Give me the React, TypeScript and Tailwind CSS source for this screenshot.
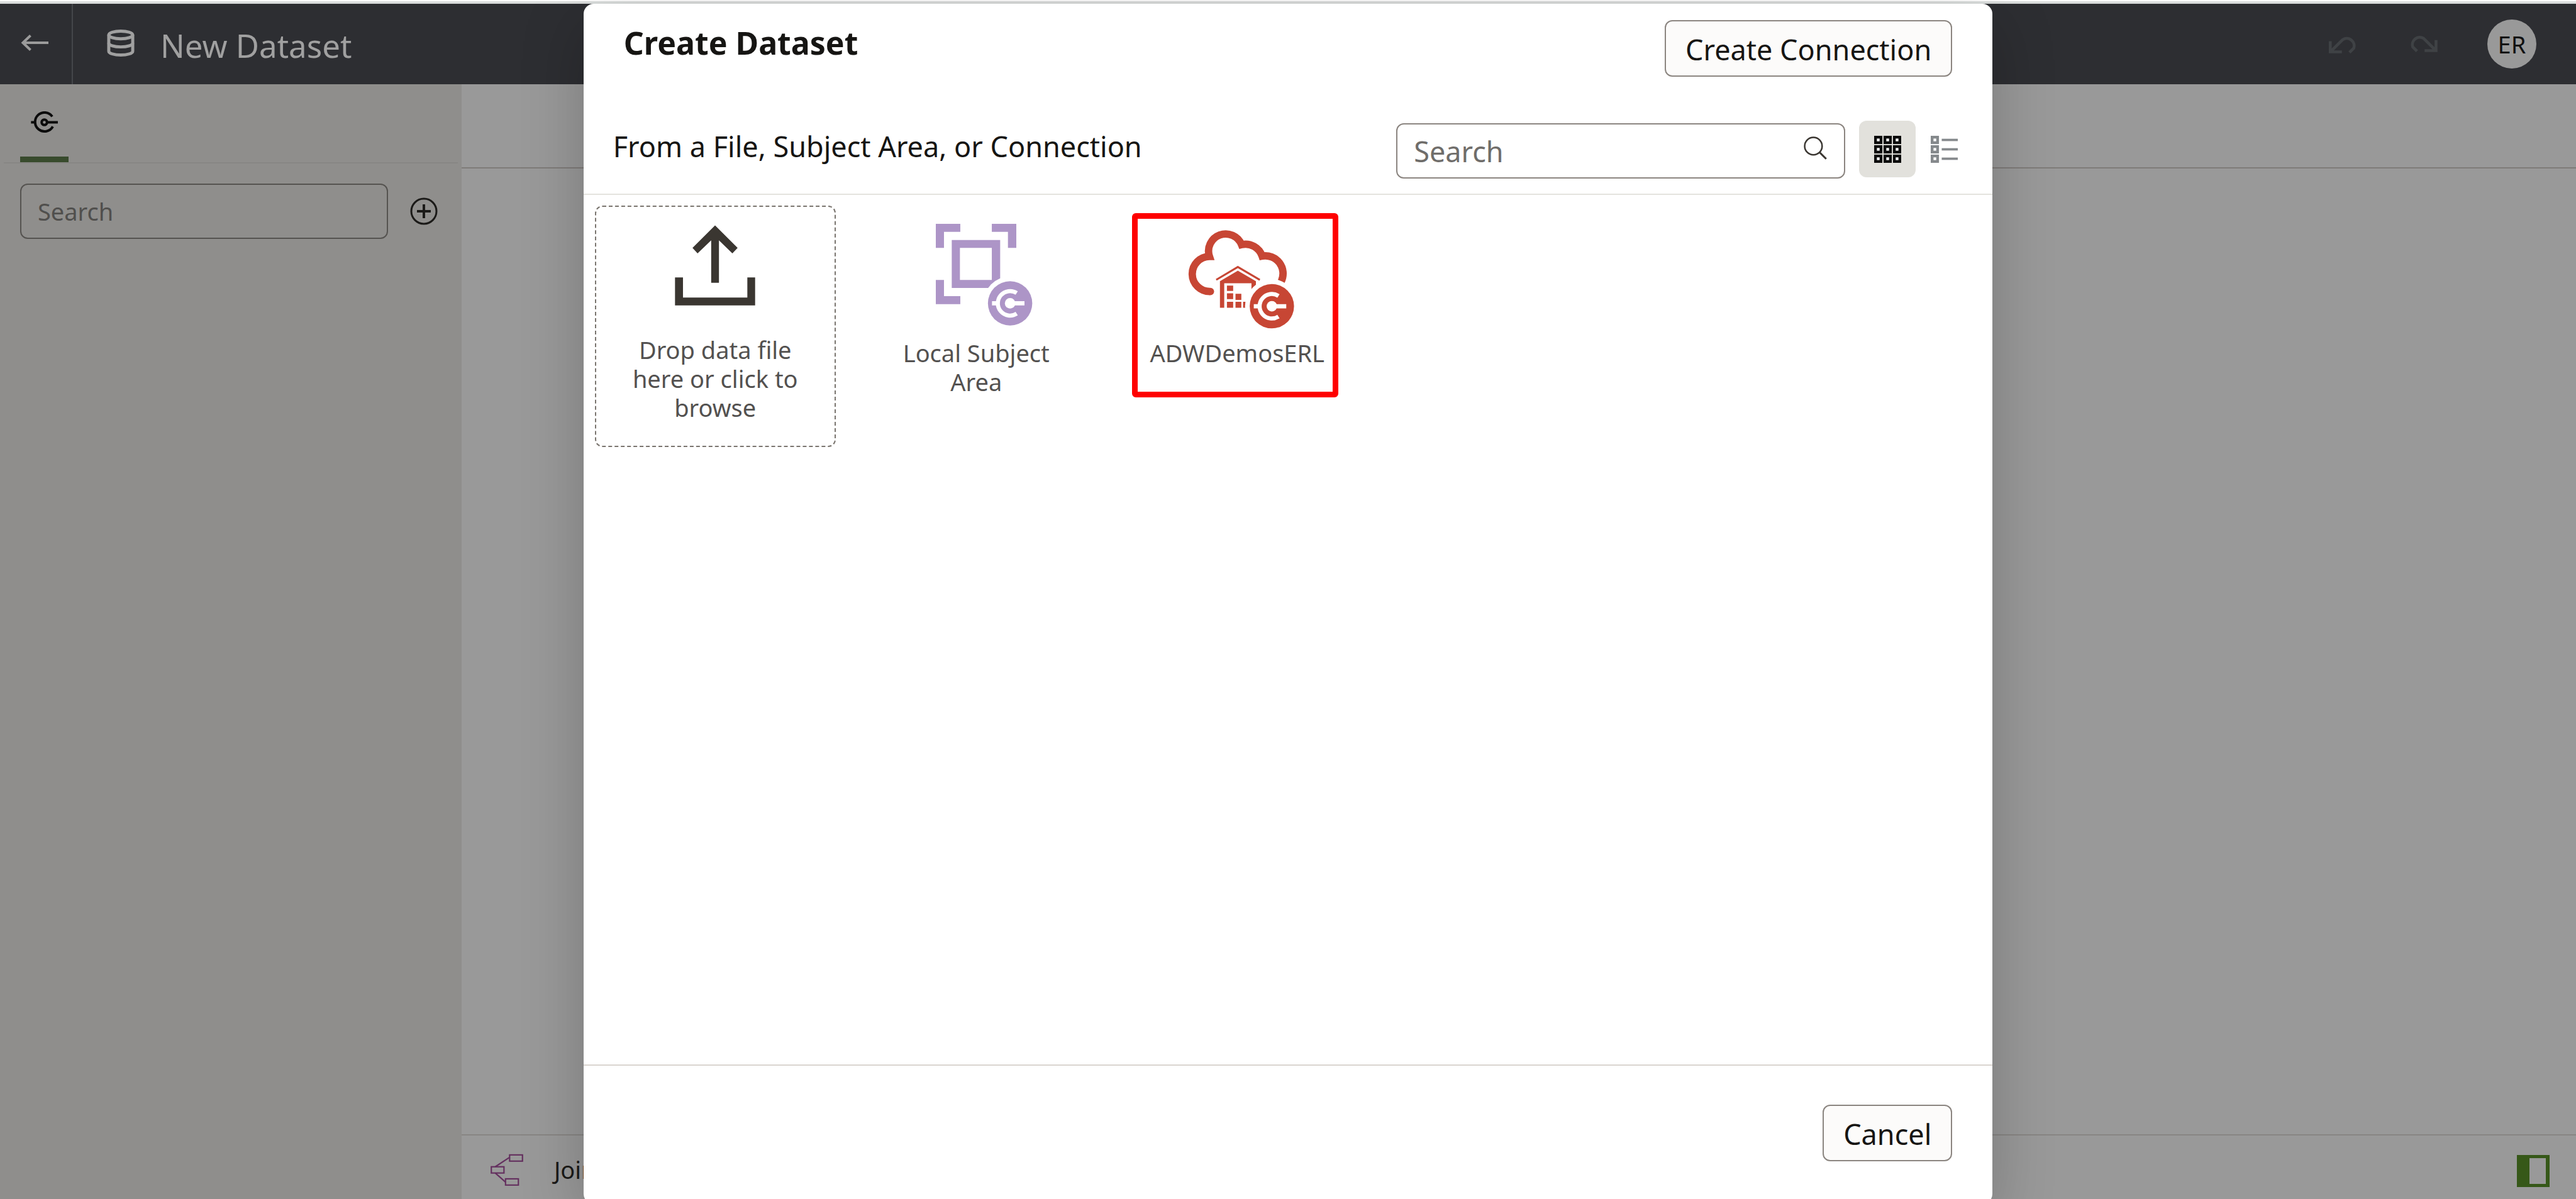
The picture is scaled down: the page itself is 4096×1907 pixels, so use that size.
import React from "react";

function BackArrow() {
  return (
    <svg viewBox="106 118 142 84" className="h-[26px] w-[44px]" fill="none" stroke="#9b9b9b" strokeWidth="13" aria-hidden="true">
      <path d="M248 160H118M156 123L117 160L156 197" />
    </svg>
  );
}

function DatabaseIcon() {
  return (
    <svg viewBox="549 91 142 140" className="h-[43px] w-[44px]" fill="none" stroke="#a0a0a0" strokeWidth="16" aria-hidden="true">
      <ellipse cx="620" cy="119" rx="62" ry="20" />
      <path d="M558 119v84c0 11 28 20 62 20s62-9 62-20v-84" />
      <path d="M558 161c0 11 28 20 62 20s62-9 62-20" />
    </svg>
  );
}

function UndoIcon() {
  return (
    <svg viewBox="50 122 148 94" className="h-[29px] w-[46px]" fill="none" stroke="#3f4245" strokeWidth="15" aria-hidden="true">
      <path d="M60 153V208H120M60 208L124 145A38 38 0 0 1 181 189L159 211" />
    </svg>
  );
}

function RedoIcon() {
  return (
    <svg viewBox="463 115 148 94" className="h-[29px] w-[46px]" fill="none" stroke="#3f4245" strokeWidth="15" aria-hidden="true">
      <path d="M600 147V201H541M600 201L536 138A38 38 0 0 0 480 182L502 204" />
    </svg>
  );
}

function ConnectionIcon() {
  return (
    <svg viewBox="157 509 140 114" className="h-[35px] w-[43px]" fill="none" stroke="#0b0b0b" strokeWidth="13" aria-hidden="true">
      <path d="M268 536A49 49 0 1 0 271 588" />
      <circle cx="227" cy="566" r="14" />
      <path d="M158 566H178M241 566H297" />
    </svg>
  );
}

function PlusCircle() {
  return (
    <svg viewBox="0 0 44 44" className="size-[44px]" fill="none" stroke="#1b1a18" strokeWidth="3" aria-hidden="true">
      <circle cx="22" cy="22" r="20" />
      <path d="M22 11V33M11 22H33" strokeWidth="4" />
    </svg>
  );
}

function SearchIcon() {
  return (
    <svg viewBox="184 157 120 120" className="size-[37px]" fill="none" stroke="#3a3631" aria-hidden="true">
      <circle cx="234" cy="207" r="45" strokeWidth="8" />
      <path d="M265 238L300 273" strokeWidth="10" />
    </svg>
  );
}

function GridIcon() {
  const steps = [0, 48, 96];
  return (
    <svg viewBox="0 0 138 138" className="size-[43px]" fill="#fff" stroke="#0a0a0a" strokeWidth="14" aria-hidden="true">
      {steps.map((y) => steps.map((x) => <rect key={`${x}-${y}`} x={x + 7} y={y + 7} width="28" height="28" />))}
    </svg>
  );
}

function ListIcon() {
  return (
    <svg viewBox="0 0 138 138" className="size-[43px]" fill="none" stroke="#85898c" aria-hidden="true">
      {[0, 48, 96].map((y) => (
        <g key={y}>
          <rect x="7" y={y + 7} width="28" height="28" strokeWidth="14" />
          <path d={`M56 ${y + 21}H138`} strokeWidth="12" />
        </g>
      ))}
    </svg>
  );
}

function JoinIcon() {
  return (
    <svg viewBox="176 563 168 166" className="size-[52px] shrink-0" fill="none" stroke="#64305f" strokeWidth="7" aria-hidden="true">
      <rect x="274" y="568" width="66" height="32" />
      <rect x="180" y="629" width="65" height="32" />
      <rect x="253" y="691" width="66" height="32" />
      <path d="M200 629L273 581M200 661L252 707" />
    </svg>
  );
}

function PanelIcon() {
  return (
    <svg viewBox="0 0 52 51" className="h-[51px] w-[52px]" aria-hidden="true">
      <path fill="#365818" fillRule="evenodd" d="M0 0H52V51H0ZM20 5V46H46V5Z" />
    </svg>
  );
}

function UploadIcon() {
  return (
    <svg viewBox="424 128 414 414" className="size-[128px] overflow-visible" fill="#3a3631" aria-hidden="true">
      <path d="M631 136L747 252L720 280L651 213V431H611V213L541 280L515 252Z" />
      <path d="M425 404H466V507H797V404H837V548H425Z" />
    </svg>
  );
}

function Badge({ cx, cy, color }: { cx: number; cy: number; color: string }) {
  return (
    <g transform={`translate(${cx} ${cy})`}>
      <circle r="138" fill="#fff" />
      <circle r="114" fill={color} />
      <path d="M34 -53A63 63 0 1 0 34 53" fill="none" stroke="#fff" strokeWidth="21" />
      <circle r="27" fill="#fff" />
      <path d="M-93 0H-60M0 0H74" fill="none" stroke="#fff" strokeWidth="22" />
    </g>
  );
}

function SubjectAreaIcon() {
  return (
    <svg viewBox="115 98 414 414" className="size-[128px] overflow-visible" aria-hidden="true">
      <g fill="#ad95c7">
        <path d="M115 98H241V139H157V222H115Z" />
        <path d="M403 98H529V222H486V139H403Z" />
        <path d="M115 387H157V470H241V511H115Z" />
        <path fillRule="evenodd" d="M197 181H446V428H197ZM239 222V387H403V222Z" />
      </g>
      <Badge cx={497} cy={507} color="#ad95c7" />
    </svg>
  );
}

function WarehouseIcon() {
  return (
    <svg viewBox="372 96 414 414" className="size-[128px] overflow-visible" aria-hidden="true">
      <path
        d="M440 444A90 90 0 0 1 437 264A88 88 0 0 1 602 203A90 90 0 0 1 708 262A91 91 0 0 1 806 392"
        fill="none"
        stroke="#c74634"
        strokeWidth="38"
      />
      <circle cx="442" cy="444" r="19" fill="#c74634" />
      <path d="M472 384L583 318L696 384" fill="none" stroke="#c74634" strokeWidth="10" />
      <g fill="#c74634">
        <path d="M491 528V391L583 337L676 391V470H653V402H513V528Z" />
        <path d="M527 414H559V441H527ZM527 453H559V483H527ZM571 456H601V487H571Z" />
        <path d="M527 497H559V528H527ZM571 497H601V528H571ZM610 497H640V528H610Z" />
      </g>
      <Badge cx={758} cy={520} color="#c74634" />
    </svg>
  );
}

function AppHeader() {
  return (
    <header className="flex h-[128px] shrink-0 items-center bg-[#2d2e32]">
      <button type="button" aria-label="Back" className="flex h-full w-[116px] items-center border-r-2 border-[#44464a] pb-1 pl-[33px]">
        <BackArrow />
      </button>
      <div className="flex items-center pl-[54px]">
        <span className="pb-1"><DatabaseIcon /></span>
        <h1 className="pt-1 pl-[41px] text-[51px] leading-[60px] text-[#a0a0a0]">New Dataset</h1>
      </div>
      <div className="ml-auto flex items-center pr-[63px]">
        <button type="button" aria-label="Undo" className="mr-[83px]"><UndoIcon /></button>
        <button type="button" aria-label="Redo" className="mr-[78px] pb-1"><RedoIcon /></button>
        <button type="button" className="size-[78px] rounded-full bg-[#999] text-[38px] leading-[78px] text-[#111]">ER</button>
      </div>
    </header>
  );
}

function Sidebar() {
  return (
    <aside className="w-[734px] shrink-0 bg-[#8f8e8c]">
      <div className="mx-1.5 flex h-[126px] items-end border-b-2 border-[#878684] pl-[26px]">
        <button type="button" aria-label="Connections" className="flex h-[119px] w-[77px] items-center justify-center border-b-9 border-[#384b2d]">
          <ConnectionIcon />
        </button>
      </div>
      <div className="mt-8 flex items-center pl-8">
        <input
          type="text"
          aria-label="Search data"
          placeholder="Search"
          className="h-[88px] w-[585px] rounded-xl border-2 border-[#555350] bg-transparent px-[26px] text-[38px] text-[#1b1a18] placeholder:text-[#504f4d]"
        />
        <button type="button" aria-label="Add" className="ml-[35px]"><PlusCircle /></button>
      </div>
    </aside>
  );
}

function Tile({ icon, label, spacing, children, className }: {
  icon: React.ReactNode;
  label: string;
  spacing: string;
  className: string;
  children?: React.ReactNode;
}) {
  return (
    <button type="button" className={`relative flex h-[384px] w-[383px] flex-col items-center rounded-xl border-2 pt-[27px] ${className}`}>
      {icon}
      <span className={`w-[290px] text-center text-[38px] leading-[46px] text-[#535150] ${spacing}`}>{label}</span>
      {children}
    </button>
  );
}

function CreateDatasetDialog() {
  return (
    <section
      role="dialog"
      aria-labelledby="dialog-title"
      className="flex h-[calc(100vh+2px)] w-[54.7%] flex-col rounded-2xl bg-white shadow-[0_30px_100px_rgba(0,0,0,0.22)]"
    >
      <div className="flex items-start justify-between pt-[26px] pr-16 pl-16">
        <h2 id="dialog-title" className="pt-1.5 text-[50px] leading-[60px] font-bold text-[#161513]">Create Dataset</h2>
        <button type="button" className="h-[90px] rounded-xl border-2 border-[#8b8580] bg-[#fcfbfa] px-[31px] pt-1 text-[45px] text-[#161513]">
          Create Connection
        </button>
      </div>
      <div className="mt-[70px] flex items-start border-b-2 border-[#e4e3de] pr-8 pb-6 pl-[47px]">
        <p className="mr-auto text-[45px] leading-[82px] text-[#161513]">From a File, Subject Area, or Connection</p>
        <div className="relative mt-1">
          <input
            type="search"
            aria-label="Search connections"
            placeholder="Search"
            className="block h-[88px] w-[714px] rounded-xl border-2 border-[#8b8580] bg-white pr-20 pl-[26px] text-[45px] text-[#161513] placeholder:text-[#6f6d6a]"
          />
          <span className="absolute top-[21px] right-[29px]"><SearchIcon /></span>
        </div>
        <button type="button" aria-label="Grid view" className="ml-[22px] flex size-[90px] items-center justify-center rounded-xl bg-[#e2e1dc]">
          <GridIcon />
        </button>
        <button type="button" aria-label="List view" className="flex size-[90px] items-center justify-center rounded-xl">
          <ListIcon />
        </button>
      </div>
      <div className="flex grow items-start gap-8 px-[18px] pt-[17px]">
        <Tile icon={<UploadIcon />} label="Drop data file here or click to browse" spacing="mt-[49px]" className="border-dashed border-[#7a756f]" />
        <Tile icon={<SubjectAreaIcon />} label="Local Subject Area" spacing="mt-[54px]" className="border-transparent" />
        <Tile icon={<WarehouseIcon />} label="ADWDemosERL" spacing="mt-[54px]" className="border-transparent">
          <span className="absolute top-[10px] left-[22px] h-[293px] w-[328px] rounded-md border-9 border-[#fe0000]" />
        </Tile>
      </div>
      <footer className="flex h-[222px] shrink-0 items-start justify-end border-t-2 border-[#d9d5d0] pt-[62px] pr-16">
        <button type="button" className="h-[90px] rounded-xl border-2 border-[#8b8580] bg-[#fcfbfa] px-[31px] pt-1 text-[45px] text-[#161513]">
          Cancel
        </button>
      </footer>
    </section>
  );
}

export default function App() {
  return (
    <div className="relative h-screen overflow-hidden font-['Noto_Sans',sans-serif]">
      <div className="flex h-full flex-col">
        <div className="h-1.5 shrink-0 border-b-4 border-[#dadddc] bg-white" />
        <AppHeader />
        <div className="flex grow bg-[#999]">
          <Sidebar />
          <main className="flex grow flex-col">
            <div className="h-[134px] border-b-2 border-[#7e7b78]" />
            <div className="grow" />
            <div className="flex h-[103px] items-center border-t-2 border-[#878583] pt-2 pr-[42px] pl-[46px]">
              <JoinIcon />
              <span className="pl-[49px] text-[38px] text-[#1b1a18]">Join Diagram</span>
              <button type="button" aria-label="Toggle panel" className="ml-auto pt-1"><PanelIcon /></button>
            </div>
          </main>
        </div>
      </div>
      <div className="absolute inset-0 flex items-start justify-center overflow-hidden pt-1.5">
        <CreateDatasetDialog />
      </div>
    </div>
  );
}
